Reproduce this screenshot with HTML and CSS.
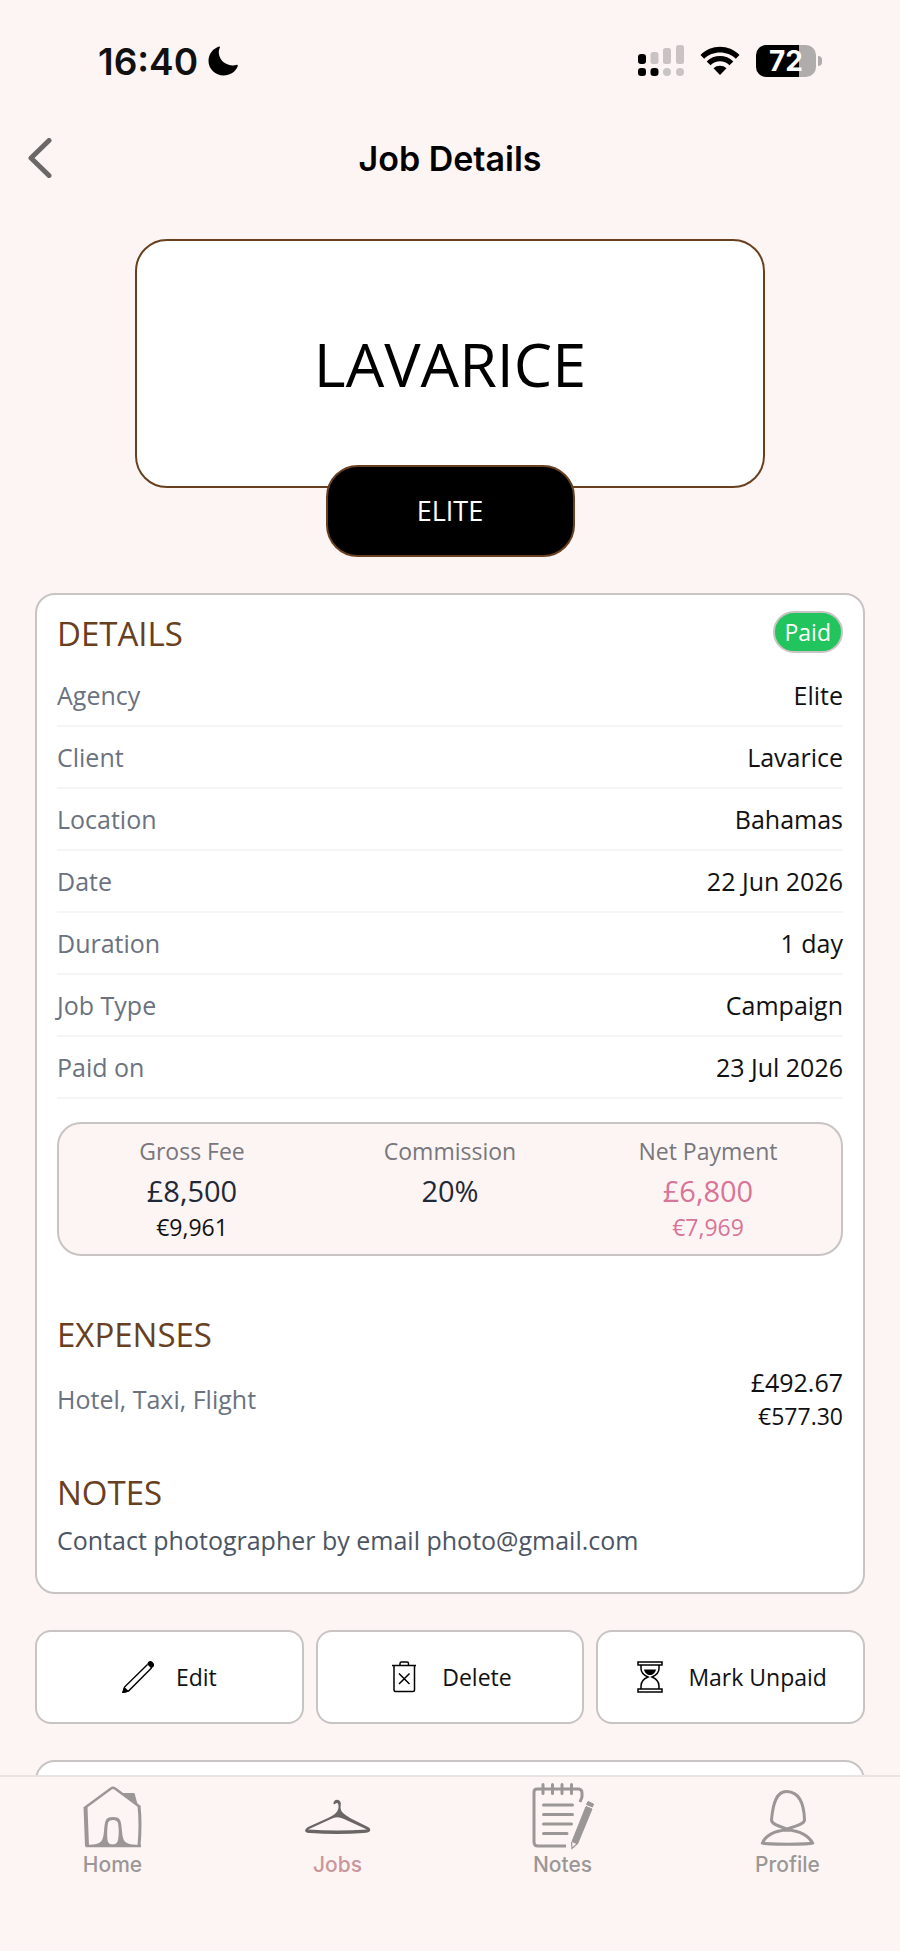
FILE: index.html
```html
<!DOCTYPE html>
<html lang="en">
<head>
  <meta charset="UTF-8" />
  <meta name="viewport" content="width=device-width, initial-scale=1.0"/>
  <title>Job Details</title>
  <link rel="stylesheet" href="styles.css">
</head>
<body>

  <!-- Status bar -->
  <div class="status-bar">
    <div class="status-left">
      <span class="time">16:40</span>
      <svg class="moon" width="30" height="30" viewBox="0 0 30 30"><path d="M11 0.5 C5 2.500 0.500 8 0.500 15 C0.500 23 7.500 29.500 15.500 29.500 C22 29.500 27.500 26 29.800 20 C29.800 19 29 18.600 28.300 19 C21 20.800 11.500 16.500 10.800 7 C10.700 4.500 11.300 3 12 1.300 C12 0.500 11.500 0.300 11 0.500 Z"/></svg>
    </div>
    <div class="status-right">
      <svg width="46" height="32" viewBox="0 0 46 32">
        <g fill="#000"><rect x="0" y="9" width="8" height="10" rx="3"/><rect x="0" y="23" width="8" height="8" rx="3"/><rect x="12.500" y="23" width="8" height="8" rx="3"/></g>
        <g fill="#c9c4c3"><rect x="12.500" y="7" width="8" height="12" rx="2.500"/><rect x="25" y="3" width="8" height="16" rx="2.500"/><rect x="38" y="0" width="8" height="19" rx="2.500"/><rect x="25" y="23" width="8" height="8" rx="4"/><rect x="38" y="23" width="8" height="8" rx="4"/></g>
      </svg>
      <svg width="40" height="30" viewBox="0 0 40 30">
        <path d="M0.500 9 C11 -2 29 -2 39.500 9 L35.800 12.700 C27.500 4.300 12.500 4.300 4.200 12.700 Z"/>
        <path d="M6.700 15.500 C14 8.300 26 8.300 33.300 15.500 L29.500 19.200 C24.500 14 15.500 14 10.500 19.200 Z"/>
        <path d="M13.500 22.300 C17 19 23 19 26.500 22.300 L20 29 Z"/>
      </svg>
      <div class="battery">
        <span class="battery-body">72</span>
        <span class="battery-tip"></span>
      </div>
    </div>
  </div>

  <header class="header">
    <button class="back" aria-label="Back">
      <svg width="24" height="40" viewBox="0 0 24 40"><path d="M21 2.500 L3 20 L21 37.500" fill="none" stroke="#6b6766" stroke-width="5" stroke-linecap="round" stroke-linejoin="round"/></svg>
    </button>
    <h1>Job Details</h1>
  </header>

  <main class="content">
    <div class="hero">
      <div class="client-card">LAVARICE</div>
      <div class="agency-tag">ELITE</div>
    </div>

    <section class="card">
      <div class="card-head">
        <h2>DETAILS</h2>
        <span class="badge">Paid</span>
      </div>
      <dl class="rows">
        <div class="row"><dt>Agency</dt><dd>Elite</dd></div>
        <div class="row"><dt>Client</dt><dd>Lavarice</dd></div>
        <div class="row"><dt>Location</dt><dd>Bahamas</dd></div>
        <div class="row"><dt>Date</dt><dd>22 Jun 2026</dd></div>
        <div class="row"><dt>Duration</dt><dd>1 day</dd></div>
        <div class="row"><dt>Job Type</dt><dd>Campaign</dd></div>
        <div class="row"><dt>Paid on</dt><dd>23 Jul 2026</dd></div>
      </dl>

      <div class="fees">
        <div class="fee">
          <span class="fee-label">Gross Fee</span>
          <span class="fee-main">£8,500</span>
          <span class="fee-sub">€9,961</span>
        </div>
        <div class="fee">
          <span class="fee-label">Commission</span>
          <span class="fee-main">20%</span>
        </div>
        <div class="fee net">
          <span class="fee-label">Net Payment</span>
          <span class="fee-main">£6,800</span>
          <span class="fee-sub">€7,969</span>
        </div>
      </div>

      <h2>EXPENSES</h2>
      <div class="expense">
        <span class="expense-name">Hotel, Taxi, Flight</span>
        <div class="expense-total">
          <span>£492.67</span>
          <span class="expense-sub">€577.30</span>
        </div>
      </div>

      <h2>NOTES</h2>
      <p class="note">Contact photographer by email photo@gmail.com</p>
    </section>

    <div class="actions">
      <button>
        <svg width="32" height="32" viewBox="0 0 32 32" fill="none" stroke="#000" stroke-width="1.400">
          <path d="M25.500 3.500 L2.500 26 L1 31.500 L6.500 30 L29.500 7"/>
          <path d="M26 3 C27 0 29 0.500 30.500 2 C32 3.500 32 5 29.500 6.500 Z" fill="#000"/>
          <path d="M2.500 27 L1 31.500 L5.500 30 Z" fill="#000"/>
        </svg>
        Edit
      </button>
      <button>
        <svg width="32" height="32" viewBox="0 0 32 32" fill="none" stroke="#000" stroke-width="1.500">
          <path d="M4 4.500 H28 M6 4.500 V29 Q6 30.500 7.500 30.500 H25 Q26.500 30.500 26.500 29 V4.500"/>
          <path d="M12 4.500 V2.500 Q12 1 13.500 1 H19 Q20.500 1 20.500 2.500 V4.500 M11 12.500 L21.500 23 M21.500 12.500 L11 23"/>
        </svg>
        Delete
      </button>
      <button>
        <svg width="32" height="32" viewBox="0 0 32 32" fill="none" stroke="#000" stroke-width="1.500">
          <rect x="4" y="1" width="24" height="3"/>
          <rect x="4" y="28" width="24" height="3"/>
          <path d="M7 4 V7.500 C7 12 10.500 14.500 14 16 C10.500 17.500 7 20.500 7 25 V28 M25 4 V7.500 C25 12 21.500 14.500 18 16 C21.500 17.500 25 20.500 25 25 V28"/>
          <path d="M10 8.500 H22 C21.500 12 18.500 14 16 14 C13.500 14 10.500 12 10 8.500 Z" fill="#000" stroke="none"/>
        </svg>
        Mark Unpaid
      </button>
    </div>

    <section class="card next-card"></section>
  </main>

  <!-- Bottom tabs -->
  <nav class="tabs">
    <a href="#">
      <svg width="66" height="66" viewBox="0 0 66 66" fill="none" stroke="#9b9796">
        <path d="M4.500 25 L31 5.500 Q33 4 35 5.500 L60 24" stroke-width="2.500"/>
        <path d="M5.500 24 L7 63" stroke-width="4"/>
        <path d="M59 23 Q61 40 59 63" stroke-width="3"/>
        <path d="M5.500 63 H61" stroke-width="2.500"/>
        <path d="M42 10 H54 Q55 10 55 12 L58 23 Z" fill="#9b9796" stroke="none"/>
        <path fill="#9b9796" fill-rule="evenodd" stroke="none" d="M10 62 C22 61 23 58 24 48 C25 38 25 34 33 34 C41 34 41 38 42 48 C43 58 44 61 56 62 V64 H10 Z M28 40 C27 46 27 52 27.500 57 C28 63 37 63 38 57 C39 52 39 46 38 40 C37 36 29 36 28 40 Z"/>
      </svg>
      <span>Home</span>
    </a>
    <a href="#" class="active">
      <svg width="66" height="66" viewBox="0 0 66 66">
        <path fill="#6a6665" fill-rule="evenodd" d="M28.500 20 C29 15.500 35 15.500 35.800 20 C36 22 35 24 36 27 C37 30 42 33 47 36 L63 44 C68 47 64 50 59 50 Q32 52 5 50 C0 50 -2 47.500 3 44 L23 35 C30 32 34 28 33.500 23 C33.500 20 32 19 30 21 C29 21.500 28 21 28.500 20 Z M26 36 L3 46.500 Q32 48.500 62 46.500 L39 36 Q32 32.500 26 36 Z"/>
      </svg>
      <span>Jobs</span>
    </a>
    <a href="#">
      <svg width="66" height="66" viewBox="0 0 66 66" fill="none" stroke="#9b9796" stroke-width="3">
        <path d="M36 63 H8 Q4 63 4 59 V9 Q4 6 7 6 H48 Q52 6 52 10 V14 L50 19"/>
        <path d="M13 1.500 V10.500 M22.500 1.500 V10.500 M32 1.500 V10.500 M41.500 1.500 V10.500 M13.500 22 H42.500 M13.500 31.500 H42.500 M13.500 41 H41.500 M13.500 50.500 H37" stroke-linecap="round"/>
        <path d="M56 23.500 L62 26 L47.500 61 L42 58.500 Z M58 18.500 L63.500 21 L62.500 24 L56.500 21.500 Z" fill="#9b9796" stroke-width="1"/>
        <path d="M41.500 59 L42 65.500 L47 61" stroke-width="1.200"/>
      </svg>
      <span>Notes</span>
    </a>
    <a href="#">
      <svg width="66" height="66" viewBox="0 0 66 66" fill="none" stroke="#9b9796">
        <path d="M32 8.500 C22 8 18 19 16.500 37 C16.500 41 23 43 32 46 C41 43 49.500 41 49.500 37 C49 19 43 9 32 8.500 Z" stroke-width="3"/>
        <path d="M32 47 C19 47.500 10 53 7.500 60 C11 61.500 54 61.500 57.500 60 C54 53 45 47.500 32 47 Z" stroke-width="3"/>
      </svg>
      <span>Profile</span>
    </a>
  </nav>

</body>
</html>
```

FILE: styles.css
```css
* {
  box-sizing: border-box;
}

body {
  margin: 0;
  height: 100vh;
  display: flex;
  flex-direction: column;
  overflow: hidden;
  background: #fdf5f3;
  color: #111;
  font-family: 'Open Sans', 'Noto Sans', sans-serif;
  font-size: 25px;
}

h1, h2, p, dl, dd {
  margin: 0;
  font-weight: 400;
}

svg {
  flex-shrink: 0;
}

/* Status bar */
.status-bar {
  display: flex;
  justify-content: space-between;
  align-items: center;
  padding: 40px 78px 0 98px;
  height: 82px;
  flex-shrink: 0;
  font-family: Inter, sans-serif;
}

.status-left {
  display: flex;
  align-items: center;
  gap: 10px;
}

.time {
  font-size: 37px;
  font-weight: 600;
}

.status-right {
  display: flex;
  align-items: center;
  gap: 16px;
}

.battery {
  display: flex;
  align-items: center;
  gap: 2px;
}

.battery-body {
  width: 60px;
  height: 32px;
  border-radius: 10px;
  background: linear-gradient(to right, #000 72%, #b0acab 72%);
  color: #fff;
  font-size: 28px;
  font-weight: 700;
  line-height: 32px;
  text-align: center;
}

.battery-tip {
  width: 4px;
  height: 10px;
  border-radius: 0 4px 4px 0;
  background: #b0acab;
}

/* Header */
.header {
  display: grid;
  grid-template-columns: 64px 1fr 64px;
  align-items: center;
  height: 154px;
  padding: 0 20px 2px;
  flex-shrink: 0;
}

.back {
  display: flex;
  padding: 8px;
  border: none;
  background: none;
  cursor: pointer;
}

.header h1 {
  font-family: Inter, sans-serif;
  font-size: 34px;
  font-weight: 600;
  text-align: center;
  color: #000;
}

/* Scrolling content */
.content {
  flex: 1;
  min-height: 0;
  overflow: hidden;
  padding: 3px 35px 0;
}

.hero {
  display: flex;
  flex-direction: column;
  align-items: center;
  margin-bottom: 36px;
}

.client-card {
  display: flex;
  align-items: center;
  justify-content: center;
  width: 76%;
  height: 249px;
  border: 2px solid #68401f;
  border-radius: 32px;
  background: #fff;
  color: #000;
  font-size: 61px;
}

.agency-tag {
  width: 30%;
  margin-top: -23px;
  border: 2px solid #68401f;
  border-radius: 32px;
  background: #000;
  color: #fff;
  font-size: 27px;
  line-height: 88px;
  text-align: center;
}

.card {
  padding: 16px 20px 28px;
  border: 2px solid #c8c4c3;
  border-radius: 20px;
  background: #fff;
}

.card h2 {
  font-size: 33px;
  line-height: 46px;
  color: #68401f;
}

.card-head {
  display: flex;
  align-items: flex-start;
  justify-content: space-between;
  margin-bottom: 8px;
}

.badge {
  padding: 0 10px;
  border: 2px solid #c8c4c3;
  border-radius: 21px;
  background: #22c45e;
  color: #fff;
  font-size: 23px;
  line-height: 38px;
}

.row {
  display: flex;
  justify-content: space-between;
  border-bottom: 2px solid #f5f5f5;
  line-height: 60px;
}

.row dt, .expense-name {
  color: #6b7280;
}

/* Fees */
.fees {
  display: grid;
  grid-template-columns: repeat(3, 1fr);
  margin: 23px 0 56px;
  padding: 12px 4px 13px;
  border: 2px solid #c8c4c3;
  border-radius: 24px;
  background: #fdf5f3;
}

.fee {
  display: flex;
  flex-direction: column;
  align-items: center;
  color: #1f2937;
}

.fee-label {
  margin-bottom: 3px;
  color: #77777d;
  font-size: 23px;
  line-height: 30px;
}

.fee-main {
  font-size: 29px;
  line-height: 44px;
}

.fee-sub {
  font-size: 23px;
  line-height: 28px;
  color: #111;
}

.net .fee-main, .net .fee-sub {
  color: #d87498;
}

/* Expenses and notes */
.expense {
  display: flex;
  align-items: center;
  justify-content: space-between;
  margin: 7px 0 37px;
}

.expense-total {
  display: flex;
  flex-direction: column;
  align-items: flex-end;
  line-height: 34px;
}

.expense-sub {
  font-size: 23px;
}

.note {
  line-height: 48px;
  color: #4b5563;
}

/* Action buttons */
.actions {
  display: grid;
  grid-template-columns: repeat(3, 1fr);
  gap: 12px;
  margin: 36px 0;
}

.actions button {
  display: flex;
  align-items: center;
  justify-content: center;
  gap: 22px;
  height: 94px;
  padding: 0;
  border: 2px solid #c8c4c3;
  border-radius: 16px;
  background: #fff;
  color: #111;
  font-family: inherit;
  font-size: 23px;
  cursor: pointer;
}

.next-card {
  height: 200px;
}

/* Bottom tabs */
.tabs {
  display: grid;
  grid-template-columns: repeat(4, 1fr);
  height: 176px;
  padding-top: 6px;
  border-top: 2px solid #e6e3e2;
  background: #fdf5f3;
  flex-shrink: 0;
  font-family: Inter, sans-serif;
  font-size: 21px;
  font-weight: 500;
}

.tabs a {
  display: flex;
  flex-direction: column;
  align-items: center;
  gap: 3px;
  color: #9b9796;
  text-decoration: none;
}

.tabs svg {
  overflow: visible;
}

.tabs .active {
  color: #c9979b;
}
```
